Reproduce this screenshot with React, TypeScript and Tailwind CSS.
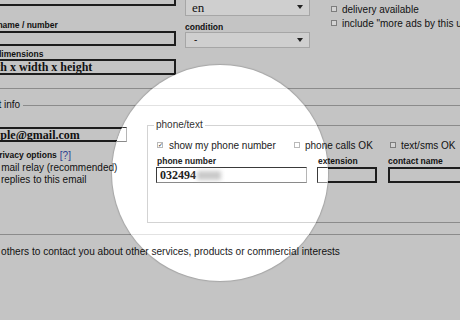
import React from 'react';

type Theme = {
  text: string;
  rule: string;
  box: string;
  select: string;
  check: string;
  fieldset: string;
};

const gray: Theme = {
  text: 'text-[#111]',
  rule: 'border-[#8b8b8b]',
  box: 'border-2 border-[#1d1d1d] bg-[#c4c4c4]',
  select: 'border border-[#a6a6a6] bg-[#cfcfcf]',
  check: 'border border-[#7d7d7d] bg-[#d3d3d3]',
  fieldset: 'border-[#8b8b8b]',
};

const light: Theme = {
  text: 'text-[#222]',
  rule: 'border-[#e2e2e2]',
  box: 'border border-[#3a3a3a] border-r-[#b5b5b5] border-b-[#8a8a8a] bg-white',
  select: 'border border-[#cfcfcf] bg-white',
  check: 'border border-[#b9b9b9] bg-white',
  fieldset: 'border-[#d3d3d3]',
};

function Check({ t, checked, dim }: { t: Theme; checked?: boolean; dim?: boolean }) {
  return (
    <span
      className={`w-[6px] h-[6px] shrink-0 flex items-center justify-center text-[6px] leading-none ${t.check} ${
        dim ? 'bg-[#a9a9a9]' : ''
      }`}
    >
      {checked ? '✓' : ''}
    </span>
  );
}

function Arrow() {
  return (
    <svg width="6" height="4" viewBox="0 0 6 4">
      <path d="M0 0h6L3 4z" fill="#222" />
    </svg>
  );
}

function Form({ t, isLight }: { t: Theme; isLight?: boolean }) {
  const label = 'font-bold text-[8.5px] leading-none whitespace-nowrap';
  const serif = "font-['Liberation_Serif',serif] font-bold text-[12px] leading-none whitespace-nowrap";
  return (
    <div className={`w-[460px] h-[320px] flex flex-col font-['Liberation_Sans',Arial,sans-serif] text-[10px] ${t.text}`}>
      {/* posting details */}
      <div className={`h-[89px] shrink-0 flex items-start border-b ${t.rule}`}>
        <div className="w-[176px] shrink-0 -mt-[10px] flex flex-col">
          <div className={`h-[16px] -ml-[4px] ${t.box}`} />
          <div className="h-[25px] flex items-end pb-[2px]">
            <span className={`${label} -ml-[30px]`}>model name / number</span>
          </div>
          <div className={`h-[15px] -ml-[4px] ${t.box}`} />
          <div className="h-[13px] flex items-end pb-[1px]">
            <span className={`${label} -ml-[27px]`}>size / dimensions</span>
          </div>
          <div className={`h-[16px] -ml-[4px] flex items-center overflow-hidden ${t.box}`}>
            <span className={`${serif} -ml-[23px]`}>length x width x height</span>
          </div>
        </div>

        <div className="ml-[9px] w-[125px] shrink-0 -mt-[2px] flex flex-col">
          <div className={`h-[18px] flex items-center justify-between pl-[6px] pr-[6px] ${t.select}`}>
            <span className="font-['Liberation_Serif',serif] text-[13px] leading-none">en</span>
            <Arrow />
          </div>
          <div className="h-[16px] flex items-end pb-[1px]">
            <span className={label}>condition</span>
          </div>
          <div className={`h-[16px] flex items-center justify-between pl-[8px] pr-[6px] ${t.select}`}>
            <span className="leading-none">-</span>
            <Arrow />
          </div>
        </div>

        <div className="ml-[21px] shrink-0 mt-[2px] flex flex-col whitespace-nowrap">
          <div className="h-[14px] flex items-center gap-[5px]">
            <Check t={t} />
            <span>delivery available</span>
          </div>
          <div className="h-[14px] flex items-center gap-[5px]">
            <Check t={t} />
            <span>include "more ads by this user" link</span>
          </div>
        </div>
      </div>

      {/* contact info */}
      <fieldset className={`mt-[10px] -mx-[40px] shrink-0 border-t border-b ${t.rule}`}>
        <legend className="ml-[9px] pr-[3px] leading-[12px] whitespace-nowrap">contact info</legend>
        <div className="ml-[39px] flex items-start">
          <div className="w-[128px] shrink-0 flex flex-col whitespace-nowrap">
            <div className={`mt-[16px] h-[15px] -ml-[2px] flex items-center overflow-hidden ${t.box} border`}>
              <span className={`${serif} -ml-[26px]`}>example@gmail.com</span>
            </div>
            <div className="mt-[8px] h-[11px] flex items-center">
              <span className={`${label} -ml-[5px]`}>privacy options</span>
              <span className="ml-[3px] text-[#2d3f8f] text-[10px] leading-none">[?]</span>
            </div>
            <div className="h-[12px] flex items-center -ml-[13px]">CL mail relay (recommended)</div>
            <div className="h-[12px] flex items-center -ml-[12px]">no replies to this email</div>
          </div>

          <fieldset className={`ml-[20px] mt-[8px] mb-[11px] flex-1 h-[104px] border ${t.fieldset}`}>
            <legend className={`ml-[6px] px-[2px] leading-[12px] ${isLight ? 'text-[#333]' : ''}`}>phone/text</legend>
            <div className="mt-[8px] h-[12px] pl-[9px] flex items-center whitespace-nowrap">
              <div className="w-[137px] shrink-0 flex items-center gap-[6px]">
                <Check t={t} checked />
                <span>show my phone number</span>
              </div>
              <div className="w-[96px] shrink-0 flex items-center gap-[5px]">
                <Check t={t} />
                <span>phone calls OK</span>
              </div>
              <div className="shrink-0 flex items-center gap-[5px]">
                <Check t={t} dim={!isLight} />
                <span>text/sms OK</span>
              </div>
            </div>
            <div className="mt-[6px] pl-[8px] flex">
              <div className="w-[151px] shrink-0 flex flex-col">
                <span className={`${label} ml-[1px] h-[10px]`}>phone number</span>
                <div className={`h-[16px] flex items-center pl-[3px] ${t.box}`}>
                  <span className={serif}>032494</span>
                  <span className="ml-[1px] w-[24px] h-[9px] bg-[#c9c9c9] blur-[2px]" />
                </div>
              </div>
              <div className="ml-[10px] w-[60px] shrink-0 flex flex-col">
                <span className={`${label} ml-[1px] h-[10px]`}>extension</span>
                <div className={`h-[16px] ${t.box}`} />
              </div>
              <div className="ml-[11px] w-[90px] shrink-0 flex flex-col">
                <span className={`${label} h-[10px]`}>contact name</span>
                <div className={`h-[16px] ${t.box}`} />
              </div>
            </div>
          </fieldset>
        </div>
      </fieldset>

      <div className="mt-[11px] h-[12px] flex items-center whitespace-nowrap text-[10.1px]">
        <span className="-ml-[27px]">ok for others to contact you about other services, products or commercial interests</span>
      </div>
    </div>
  );
}

export default function App() {
  return (
    <div className="relative w-[460px] h-[320px] overflow-hidden bg-[#c4c4c4]">
      <Form t={gray} />
      <div className="absolute left-[112px] top-[65px] w-[216px] h-[216px] rounded-full overflow-hidden bg-white shadow-[0_0_1px_1px_rgba(0,0,0,0.15)]">
        <div className="absolute -left-[112px] -top-[65px]">
          <Form t={light} isLight />
        </div>
      </div>
    </div>
  );
}
